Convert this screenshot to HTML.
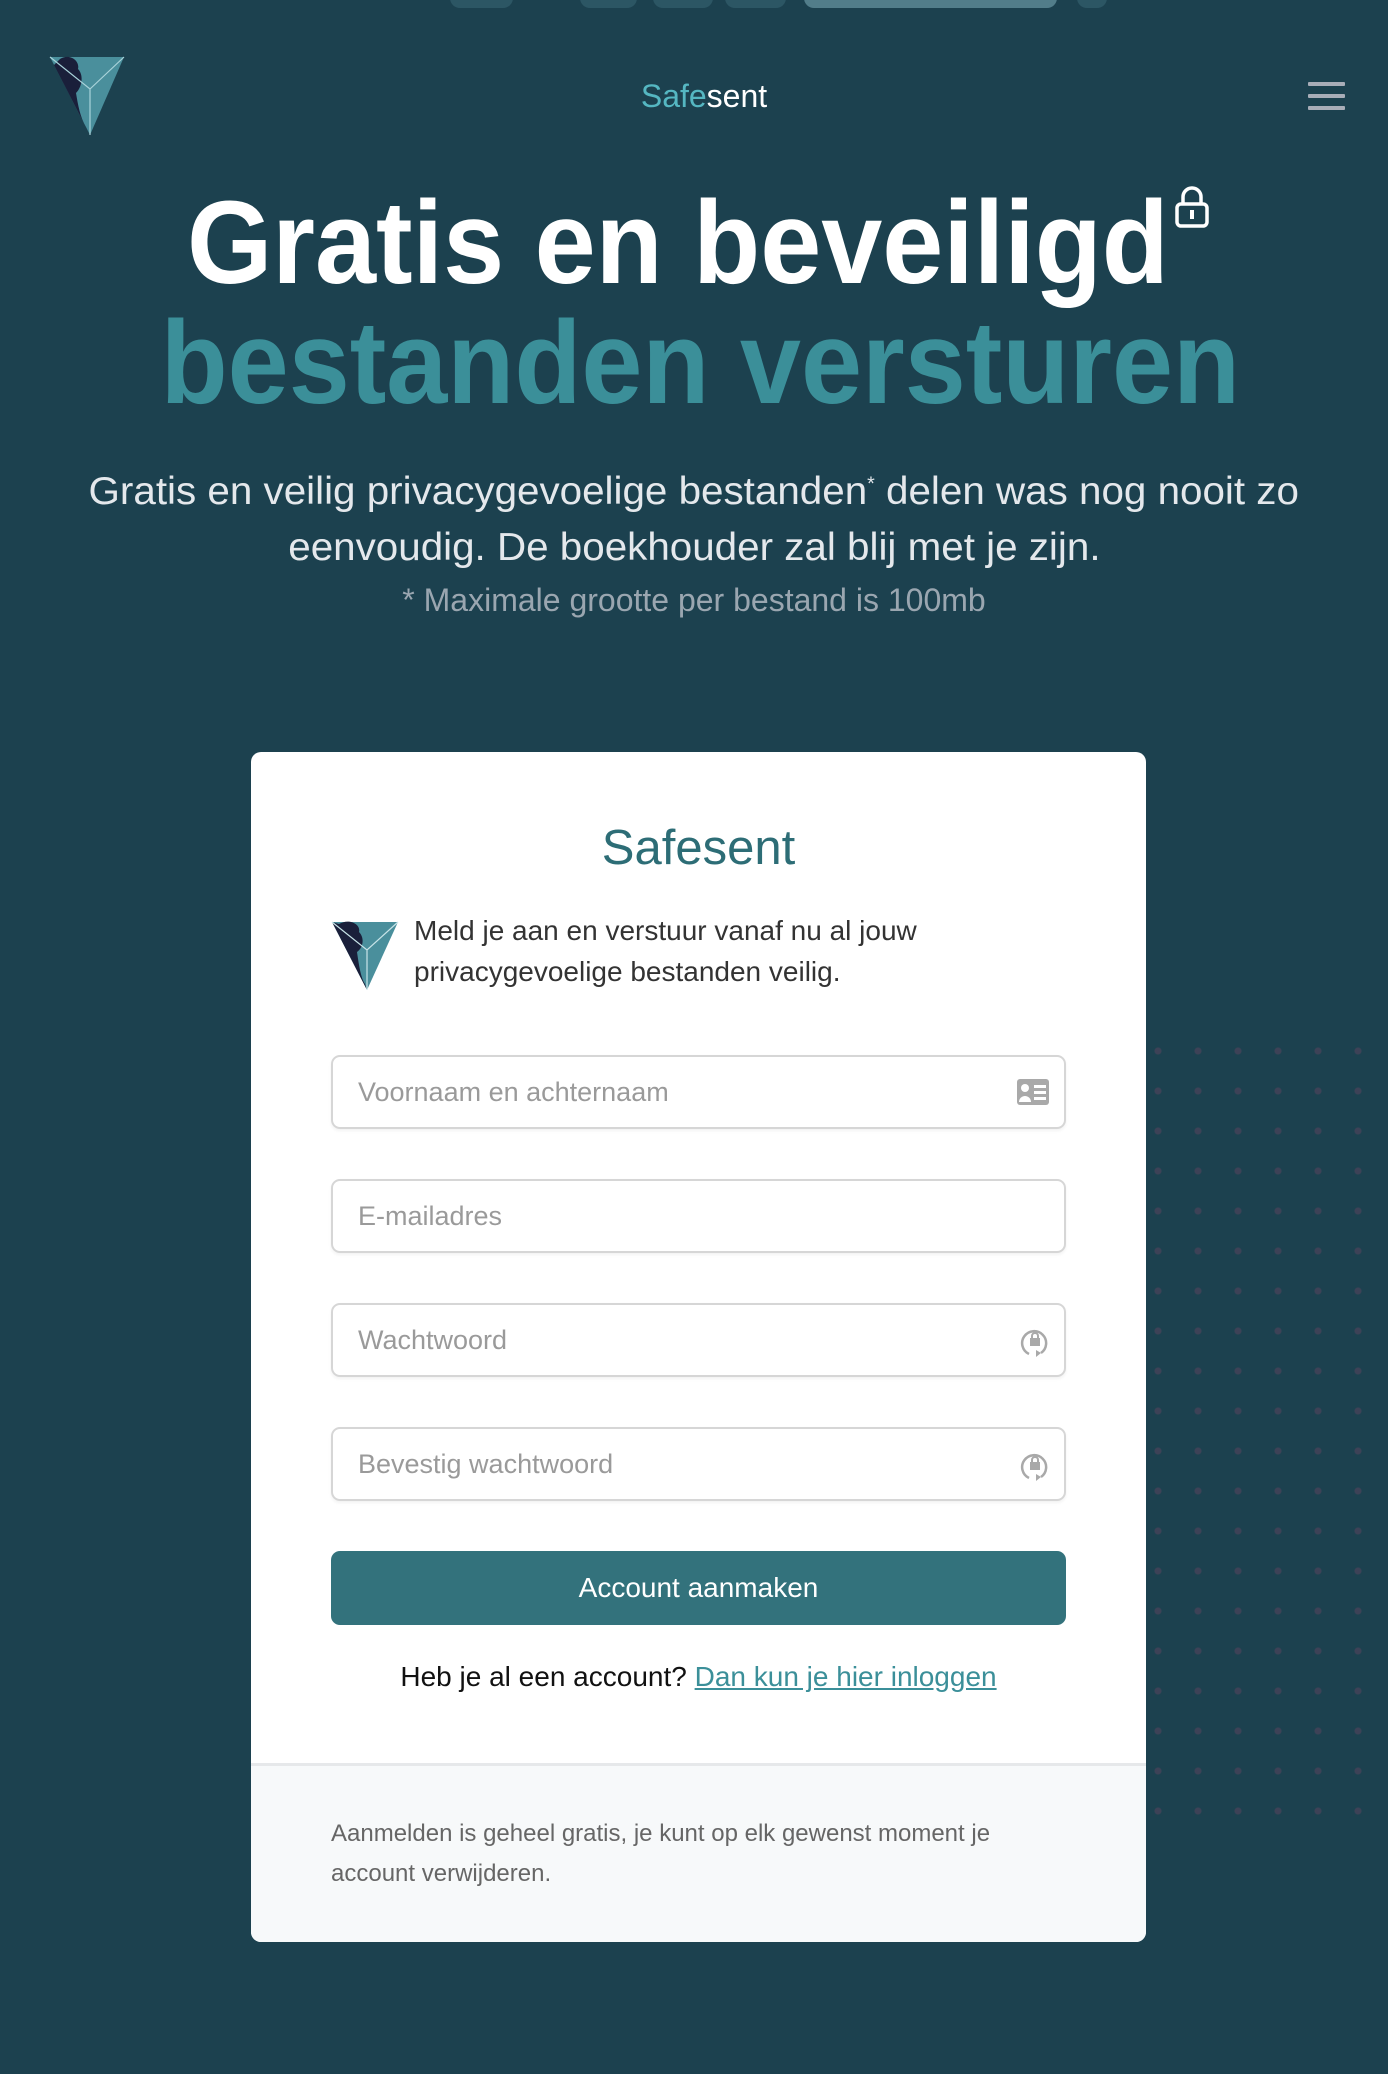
<!DOCTYPE html>
<html><head><meta charset="utf-8"><style>
*{margin:0;padding:0;box-sizing:border-box}
body{width:1388px;height:2074px;background:#1c414f;position:relative;overflow:hidden;font-family:"Liberation Sans",sans-serif}
.a{position:absolute;line-height:1;white-space:nowrap}
.c{left:0;width:1388px;text-align:center}
.sx{display:inline-block;transform:scaleX(.92);transform-origin:center}
.pill{position:absolute;top:-12px;height:20px;border-radius:10px;background:#2c5664}
.dots{position:absolute;left:1138px;top:1031px;width:240px;height:790px;background-image:radial-gradient(circle,#3d4257 3px,transparent 4px);background-size:40px 40px}
.card{position:absolute;left:251px;top:752px;width:895px;height:1190px;background:#fff;border-radius:10px;overflow:hidden}
.inp{position:absolute;left:80px;width:735px;height:74px;border:2px solid #d6d6d6;border-radius:9px;font-size:27px;color:#9a9a9a;padding-left:25px;display:flex;align-items:center;box-shadow:0 2px 3px rgba(0,0,0,.05)}
.inp svg{position:absolute;right:14px;top:20px}
</style></head><body>
<div class="pill" style="left:450px;width:63px"></div>
<div class="pill" style="left:580px;width:57px"></div>
<div class="pill" style="left:653px;width:60px"></div>
<div class="pill" style="left:725px;width:61px"></div>
<div class="pill" style="left:804px;width:253px;background:#527d8a"></div>
<div class="pill" style="left:1077px;width:30px"></div>
<div class="dots"></div>

<svg class="a" style="left:48px;top:55px" width="78" height="82" viewBox="0 0 78 82">
<polygon points="2,2 76,2 42,80" fill="#4a8f9c"/>
<path d="M12,4 C22,-2 32,6 30,14 C36,20 34,32 28,38 C30,50 32,62 38,72 L42,80 L6,10 Z" fill="#1a1f3a"/>
<path d="M2,2 L42,34 L76,2 M42,34 L42,80" stroke="#a9d3da" stroke-width="1.2" fill="none"/>
</svg>
<div class="a c" style="top:80px;font-size:32px;color:#fff;left:10px"><span style="color:#55b7c2">Safe</span>sent</div>
<div class="a" style="left:1308px;top:82px;width:37px;height:4px;background:#a8adb8;border-radius:1px"></div>
<div class="a" style="left:1308px;top:94px;width:37px;height:4px;background:#a8adb8;border-radius:1px"></div>
<div class="a" style="left:1308px;top:106px;width:37px;height:4px;background:#a8adb8;border-radius:1px"></div>

<div class="a c" style="top:184px;font-size:118px;font-weight:bold;color:#fff;left:-16px"><span class="sx" style="transform:scaleX(.93)">Gratis en beveiligd</span></div>
<svg class="a" style="left:1174px;top:186px" width="36" height="44" viewBox="0 0 36 44"><path d="M9,18 V11 a9,9 0 0 1 18,0 V18" stroke="#fff" stroke-width="3.5" fill="none"/><rect x="3" y="18" width="30" height="22" rx="4" stroke="#fff" stroke-width="3.5" fill="none"/><rect x="16" y="24" width="4" height="9" fill="#fff"/></svg>
<div class="a c" style="top:304px;font-size:118px;font-weight:bold;color:#3b8f99;left:6px"><span class="sx" style="transform:scaleX(.93)">bestanden versturen</span></div>

<div class="a c" style="top:472px;font-size:39px;color:#e4e8ec"><span class="sx" style="transform:scaleX(1.035)">Gratis en veilig privacygevoelige bestanden<sup style="font-size:19px">*</sup> delen was nog nooit zo</span></div>
<div class="a c" style="top:528px;font-size:39px;color:#e4e8ec"><span class="sx" style="transform:scaleX(1.035)">eenvoudig. De boekhouder zal blij met je zijn.</span></div>
<div class="a c" style="top:584px;font-size:32px;color:#9aa6b0"><span class="sx" style="transform:scaleX(1.0)">* Maximale grootte per bestand is 100mb</span></div>

<div class="card">
<div class="a" style="left:0;width:895px;text-align:center;top:72px;font-size:49px;color:#2d6d76">Safesent</div>
<svg class="a" style="left:80px;top:168px" width="68" height="72" viewBox="0 0 68 72">
<polygon points="1,2 67,2 36,70" fill="#4a8f9c"/>
<path d="M8,4 C18,-2 30,4 28,12 C34,18 32,28 26,32 C28,46 30,58 34,64 L36,70 L1,2 Z" fill="#1a1f3a"/>
<path d="M1,2 L36,30 L67,2 M36,30 L36,70" stroke="#c8e4e8" stroke-width="1.2" fill="none"/>
</svg>
<div class="a" style="left:163px;top:165px;font-size:28px;color:#333">Meld je aan en verstuur vanaf nu al jouw</div>
<div class="a" style="left:163px;top:206px;font-size:28px;color:#333">privacygevoelige bestanden veilig.</div>

<div class="inp" style="top:303px">Voornaam en achternaam<svg width="34" height="30" viewBox="0 0 34 30"><rect x="1" y="2" width="32" height="26" rx="3" fill="#a9a9a9"/><circle cx="9" cy="11" r="4" fill="#fff"/><path d="M3,25 a6,6 0 0 1 12,0Z" fill="#fff"/><rect x="18" y="8" width="12" height="3" fill="#fff"/><rect x="18" y="14" width="12" height="3" fill="#fff"/><rect x="18" y="20" width="12" height="3" fill="#fff"/></svg></div>
<div class="inp" style="top:427px">E-mailadres</div>
<div class="inp" style="top:551px">Wachtwoord<svg width="30" height="34" viewBox="0 0 30 34"><path d="M9,29 A12,12 0 1 1 21,28" stroke="#a9a9a9" stroke-width="2.5" fill="none"/><path d="M16,25 L21,28 L16,32Z" fill="#a9a9a9"/><rect x="10" y="13" width="10" height="8" fill="#a9a9a9"/><path d="M12,13 v-2 a3,3 0 0 1 6,0 v2" stroke="#a9a9a9" stroke-width="2" fill="none"/></svg></div>
<div class="inp" style="top:675px">Bevestig wachtwoord<svg width="30" height="34" viewBox="0 0 30 34"><path d="M9,29 A12,12 0 1 1 21,28" stroke="#a9a9a9" stroke-width="2.5" fill="none"/><path d="M16,25 L21,28 L16,32Z" fill="#a9a9a9"/><rect x="10" y="13" width="10" height="8" fill="#a9a9a9"/><path d="M12,13 v-2 a3,3 0 0 1 6,0 v2" stroke="#a9a9a9" stroke-width="2" fill="none"/></svg></div>

<div class="a" style="left:80px;top:799px;width:735px;height:74px;background:#33727c;border-radius:9px;color:#fff;font-size:28px;display:flex;align-items:center;justify-content:center">Account aanmaken</div>
<div class="a" style="left:0;width:895px;text-align:center;top:911px;font-size:28px;color:#111">Heb je al een account? <span style="color:#3b8f99;text-decoration:underline">Dan kun je hier inloggen</span></div>

<div class="a" style="left:0;top:1011px;width:895px;height:179px;background:#f7f9fa;border-top:3px solid #e6e8ea"></div>
<div class="a" style="left:80px;top:1070px;font-size:24px;color:#666">Aanmelden is geheel gratis, je kunt op elk gewenst moment je</div>
<div class="a" style="left:80px;top:1110px;font-size:24px;color:#666">account verwijderen.</div>
</div>
</body></html>
